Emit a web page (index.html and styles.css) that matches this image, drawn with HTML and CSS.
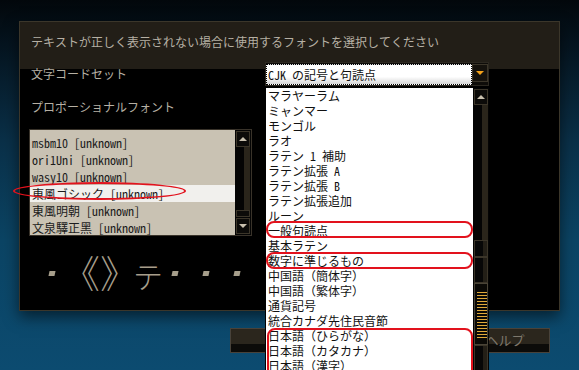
FILE: index.html
```html
<!DOCTYPE html>
<html lang="ja">
<head>
<meta charset="utf-8">
<link rel="stylesheet" href="styles.css">
</head>
<body>
<div class="screen">
  <div class="dialog">
    <div class="dlg-head">テキストが正しく表示されない場合に使用するフォントを選択してください</div>
    <div class="dlg-body">
      <div class="row row-charset">
        <span class="label">文字コードセット</span>
        <div class="select">
          <div class="select-field">CJK の記号と句読点</div>
          <div class="select-btn"><span class="tri-down"></span></div>
        </div>
      </div>
      <div class="row row-font"><span class="label">プロポーショナルフォント</span></div>
      <div class="fontlist">
        <ul class="fl-items">
          <li>msbm10 [unknown]</li>
          <li>ori1Uni [unknown]</li>
          <li>wasy10 [unknown]</li>
          <li class="sel">東風ゴシック [unknown]</li>
          <li>東風明朝 [unknown]</li>
          <li>文泉驛正黑 [unknown]</li>
        </ul>
        <div class="fl-scroll">
          <div class="sb-btn"><span class="tri-up"></span></div>
          <div class="sb-track"></div>
          <div class="sb-thumb-small"></div>
          <div class="sb-btn"><span class="tri-dn"></span></div>
        </div>
      </div>
      <div class="preview">
        <span class="dot"></span>
        <span class="glyphs">《<span class="close">》</span><span class="te">テ</span></span>
        <span class="dot d2"></span>
        <span class="dot d3"></span>
        <span class="dot d3"></span>
      </div>
    </div>
  </div>
  <div class="buttons">
    <div class="btn"></div>
    <div class="btn"></div>
    <div class="btn">ヘルプ</div>
  </div>

  <div class="popup">
    <ul class="pop-items">
      <li>マラヤーラム</li>
      <li>ミャンマー</li>
      <li>モンゴル</li>
      <li>ラオ</li>
      <li>ラテン 1 補助</li>
      <li>ラテン拡張 A</li>
      <li>ラテン拡張 B</li>
      <li>ラテン拡張追加</li>
      <li>ルーン</li>
      <li>一般句読点</li>
      <li>基本ラテン</li>
      <li>数字に準じるもの</li>
      <li>中国語（簡体字）</li>
      <li>中国語（繁体字）</li>
      <li>通貨記号</li>
      <li>統合カナダ先住民音節</li>
      <li>日本語（ひらがな）</li>
      <li>日本語（カタカナ）</li>
      <li>日本語（漢字）</li>
    </ul>
    <div class="pop-scroll">
      <div class="sb-btn"><span class="tri-up"></span></div>
      <div class="sb-track long"></div>
      <div class="sb-seg s1"></div>
      <div class="sb-seg s2"></div>
      <div class="sb-thumb"></div>
      <div class="sb-seg s3"></div>
    </div>
  </div>

  <div class="mark m-font"></div>
  <div class="mark m-punct"></div>
  <div class="mark m-num"></div>
  <div class="mark m-jp"></div>
</div>
</body>
</html>
```

FILE: styles.css
```css
* { box-sizing: border-box; margin: 0; padding: 0; }
html, body { width: 579px; height: 370px; overflow: hidden; }
body {
  font-family: "Noto Sans Mono CJK JP", "Noto Sans CJK JP", "DejaVu Sans Mono", sans-serif;
  font-size: 12px;
  background: linear-gradient(180deg, #02070b 0%, #05141f 12%, #0a3048 38%, #0b4464 65%, #0c4b70 100%);
}
ul { list-style: none; }

.screen {
  position: relative;
  width: 579px;
  height: 370px;
  padding: 21px 19px 0 19px;
}

.dialog {
  width: 541px;
  height: 290px;
  display: flex;
  flex-direction: column;
  border: 1px solid #3b362a;
  box-shadow: 0 6px 14px rgba(0, 0, 0, 0.55);
}
.dlg-head {
  height: 47px;
  background: #221e17;
  color: #b6b0a4;
  line-height: 16px;
  padding: 12px 0 0 11px;
  white-space: nowrap;
}
.dlg-body {
  flex: 1;
  background: #000;
  padding: 0 0 0 11px;
  display: flex;
  flex-direction: column;
}

.row { display: flex; align-items: center; }
.label { color: #b6b0a4; line-height: 16px; white-space: nowrap; }
.row-charset { height: 24px; margin-top: -7px; }
.row-charset .label { width: 234px; }
.row-font { margin-top: 13px; height: 16px; }

.select {
  display: flex;
  width: 224px;
  height: 24px;
  background: #0e0c09;
  border: 1px solid #2c2820;
  padding-top: 1px;
}
.select-field {
  width: 206px;
  height: 21px;
  border: 1px dotted #000;
  background: linear-gradient(180deg, #fff 0%, #fff 62%, #d6d6d6 100%);
  color: #111;
  line-height: 19px;
  padding-left: 1px;
  white-space: nowrap;
}
.select-btn {
  width: 16px;
  height: 18px;
  border: 1px solid #3b3529;
  background: #15120d;
  display: flex;
  align-items: center;
  justify-content: center;
}
.tri-down {
  width: 0; height: 0;
  border-left: 4px solid transparent;
  border-right: 4px solid transparent;
  border-top: 4px solid #f6a31a;
}

.fontlist {
  display: flex;
  width: 223px;
  height: 107px;
  margin-top: 14px;
  margin-left: -2px;
  border: 1px solid #39332a;
}
.fl-items {
  width: 205px;
  background: #c9c2b3;
  padding-top: 4px;
  color: #1c1c1c;
}
.fl-items li { line-height: 17px; height: 17px; padding-left: 2px; white-space: nowrap; }
.fl-items li.sel { background: #f1f0ed; }

.fl-scroll, .pop-scroll {
  width: 16px;
  background: #040404;
  display: flex;
  flex-direction: column;
}
.sb-btn {
  height: 16px;
  margin: 1px 1px 0 1px;
  border: 1px solid #3b3529;
  background: #0c0b09;
  display: flex;
  align-items: center;
  justify-content: center;
}
.tri-up {
  width: 0; height: 0;
  border-left: 4px solid transparent;
  border-right: 4px solid transparent;
  border-bottom: 4px solid #c9c1af;
}
.tri-dn {
  width: 0; height: 0;
  border-left: 4px solid transparent;
  border-right: 4px solid transparent;
  border-top: 4px solid #c9c1af;
}
.sb-track {
  flex: 1;
  background: linear-gradient(90deg, #040404 0 9px, #2a251b 9px 15px, #040404 15px);
}
.fl-scroll .sb-btn:last-child { margin-bottom: 1px; }
.sb-thumb-small {
  height: 7px;
  margin: 0 1px;
  border: 1px solid #3b3529;
  background: #0c0b09;
}

.preview {
  display: flex;
  align-items: center;
  height: 34px;
  margin-top: 20px;
  padding-left: 18px;
  color: #a69e8b;
}
.dot {
  width: 6px;
  height: 5px;
  background: #a69e8b;
  transform: skewX(-12deg);
  flex: none;
}
.glyphs {
  font-family: "Noto Sans CJK JP", sans-serif;
  font-size: 38px;
  line-height: 34px;
  font-weight: 300;
  margin-left: 7px;
  flex: none;
  white-space: nowrap;
}
.glyphs .close { letter-spacing: -5px; }
.glyphs .te { font-size: 30px; }
.dot.d2 { margin-left: 9px; }
.dot.d3 { margin-left: 25px; }

.buttons {
  display: flex;
  justify-content: flex-end;
  gap: 25px;
  margin-top: 17px;
  padding-right: 10px;
}
.btn {
  width: 90px;
  height: 25px;
  border: 1px solid #48423a;
  background: linear-gradient(180deg, #2b261d 0 66%, #0c0b09 66%);
  color: #7e786c;
  text-align: center;
  line-height: 16px;
  padding-top: 3px;
  font-size: 13px;
}

/* popup list (overlay) */
.popup {
  position: absolute;
  left: 265px;
  top: 87px;
  width: 224px;
  height: 300px;
  display: flex;
  border-left: 1px solid #000;
  border-top: 1px solid #000;
}
.pop-items {
  width: 207px;
  background: #fff;
  color: #111;
}
.pop-items li { height: 15px; line-height: 15px; padding-left: 2px; white-space: nowrap; }
.pop-scroll { width: 16px; }
.pop-scroll .sb-btn { height: 16px; margin: 1px 1px 0 1px; }
.sb-track.long { flex: none; height: 135px; }
.sb-seg {
  margin: 0 1px;
  border: 1px solid #3b3529;
  background: linear-gradient(90deg, #070707 0 8px, #231f17 8px);
}
.sb-seg.s1 { height: 17px; }
.sb-seg.s2 { height: 26px; }
.sb-seg.s3 { flex: 1; }
.sb-thumb {
  height: 62px;
  margin: 0 1px;
  border: 1px solid #4a4437;
  background-color: #0a0906;
  background-image: repeating-linear-gradient(180deg, transparent 0 2px, #e0a93a 2px 3px);
  background-size: 10px 50px;
  background-repeat: no-repeat;
  background-position: 2px 6px;
}

/* red annotation marks */
.mark { position: absolute; border: 2px solid #e2121d; }
.m-font { left: 13px; top: 182px; width: 173px; height: 18px; border-radius: 50%; }
.m-punct { left: 266px; top: 221px; width: 207px; height: 17px; border-radius: 8px; }
.m-num { left: 266px; top: 252px; width: 207px; height: 17px; border-radius: 8px; }
.m-jp { left: 267px; top: 328px; width: 206px; height: 60px; border-radius: 8px; }
```
